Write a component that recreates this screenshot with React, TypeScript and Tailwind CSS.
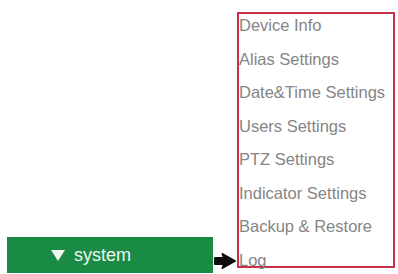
import React from "react";

const items = [
  "Device Info",
  "Alias Settings",
  "Date&Time Settings",
  "Users Settings",
  "PTZ Settings",
  "Indicator Settings",
  "Backup & Restore",
  "Log",
];

export default function App() {
  return (
    <div className="w-[398px] h-[274px] bg-white flex items-end overflow-hidden font-['Liberation_Sans',Arial,sans-serif]">
      <div className="ml-[7px] mb-[1px] w-[206px] h-[36px] bg-[#1a8b45] flex items-center text-[#eef7f0]">
        <svg width="14" height="11" viewBox="0 0 14 11" className="ml-[44px]">
          <polygon points="0,0 14,0 7,11" fill="#f2f8f3" />
        </svg>
        <span className="ml-[9px] text-[18px] leading-[36px]">system</span>
      </div>
      <svg width="22" height="16" viewBox="0 0 22 16" className="mb-[5px] ml-[1px]">
        <path d="M1,5 H10 L8.5,1 L21,8 L8.5,15 L10,11 H1 Z" fill="#0d0d0d" stroke="#0d0d0d" strokeWidth="2" strokeLinejoin="round" />
      </svg>
      <div className="self-start mt-[12px] ml-[1px] w-[158px] h-[256px] border-2 border-[#c8304a] pt-[3px] flex flex-col gap-[16.5px]">
        {items.map((t) => (
          <div key={t} className="text-[16.5px] leading-[17px] text-[#858585] whitespace-nowrap">
            {t}
          </div>
        ))}
      </div>
    </div>
  );
}
